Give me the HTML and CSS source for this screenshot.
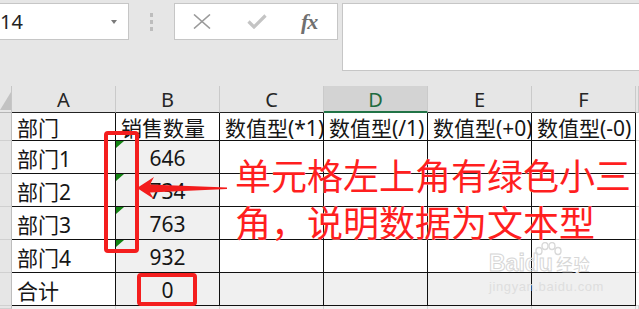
FILE: index.html
```html
<!DOCTYPE html>
<html lang="zh-CN">
<head>
<meta charset="utf-8">
<title>Excel</title>
<link rel="stylesheet" href="styles.css">
</head>
<body>
<div class="toolbar">
  <div class="namebox"><span class="name">14</span><span class="caret"></span></div>
  <div class="grip"><i></i><i></i><i></i></div>
  <div class="fxbox">
    <svg class="ic-x" width="18" height="15" viewBox="0 0 18 15"><path d="M1 0.5 L17 14.5 M17 0.5 L1 14.5" stroke="#9a9a9a" stroke-width="1.6" fill="none"/></svg>
    <svg class="ic-ok" width="20" height="15" viewBox="0 0 20 15"><path d="M1.5 7.5 L7 13 L18.5 1.5" stroke="#c4c4c4" stroke-width="3.2" fill="none"/></svg>
    <span class="fx">fx</span>
  </div>
  <div class="formula"></div>
</div>

<div class="sheet">
  <div class="corner"><svg width="12" height="27" viewBox="0 0 12 27"><polygon points="0,24 11,24 11,6" fill="#c2c2c2"/></svg></div>
  <div class="ch">A</div><div class="ch">B</div><div class="ch">C</div><div class="ch sel">D</div><div class="ch">E</div><div class="ch">F</div><div class="ch edge"></div>

  <div class="rh"></div>
  <div class="c">部门</div><div class="c">销售数量</div><div class="c">数值型(*1)</div><div class="c">数值型(/1)</div><div class="c">数值型(+0)</div><div class="c">数值型(-0)</div><div class="x"></div>

  <div class="rh"></div>
  <div class="c">部门1</div><div class="c g num tri">646</div><div class="c"></div><div class="c"></div><div class="c"></div><div class="c"></div><div class="x"></div>

  <div class="rh"></div>
  <div class="c">部门2</div><div class="c g num tri">734</div><div class="c"></div><div class="c"></div><div class="c"></div><div class="c"></div><div class="x"></div>

  <div class="rh"></div>
  <div class="c">部门3</div><div class="c g num tri">763</div><div class="c"></div><div class="c"></div><div class="c"></div><div class="c"></div><div class="x"></div>

  <div class="rh"></div>
  <div class="c">部门4</div><div class="c g num tri">932</div><div class="c"></div><div class="c"></div><div class="c"></div><div class="c"></div><div class="x"></div>

  <div class="rh"></div>
  <div class="c">合计</div><div class="c g num">0</div><div class="c g"></div><div class="c g"></div><div class="c g"></div><div class="c g"></div><div class="x"></div>

  <div class="rh"></div>
  <div class="r7"></div><div class="r7"></div><div class="r7"></div><div class="r7"></div><div class="r7"></div><div class="r7"></div><div class="r7"></div>
</div>

<div class="mark mark-col"></div>
<div class="mark mark-sum"></div>
<svg class="arrow" width="100" height="30" viewBox="0 0 100 30"><polygon points="0,13 17,2 13,9.5 90,12.5 90,14 13,17.5 17,24" fill="#f31c1c"/></svg>
<div class="note">单元格左上角有绿色小三<br>角，说明数据为文本型</div>

<div class="wm">
  <svg class="paw" width="30" height="17" viewBox="0 0 30 17"><g fill="none" stroke="#d9d9d9" stroke-width="1.4"><ellipse cx="6" cy="9" rx="3" ry="3.5"/><ellipse cx="12" cy="4" rx="3" ry="3.5"/><ellipse cx="19" cy="4" rx="3" ry="3.5"/><ellipse cx="25" cy="9" rx="3" ry="3.5"/></g></svg>
  <div class="wm-top"><span class="wm-b">Bai</span><span class="wm-b">du</span><span class="wm-c">经验</span></div>
  <div class="wm-url">jingyan.baidu.com</div>
</div>
</body>
</html>
```
FILE: styles.css
```css
* { box-sizing: border-box; }
html, body { margin: 0; padding: 0; }
body {
  width: 639px;
  height: 309px;
  overflow: hidden;
  position: relative;
  background: #e6e6e6;
  font-family: "Noto Sans", "Noto Sans CJK SC", sans-serif;
}

/* formula bar */
.toolbar {
  height: 86px;
  display: flex;
  align-items: flex-start;
  padding-top: 3px;
}
.namebox {
  margin-left: -1px;
  width: 130px;
  height: 37px;
  background: #fff;
  border: 1px solid #c6c6c6;
  display: flex;
  align-items: center;
  justify-content: space-between;
  padding-right: 11px;
}
.name { font-size: 20px; color: #222; margin-left: 0; }
.caret {
  width: 0; height: 0;
  border-left: 3px solid transparent;
  border-right: 3px solid transparent;
  border-top: 4px solid #7a7a7a;
}
.grip {
  width: 45px;
  height: 37px;
  display: flex;
  flex-direction: column;
  align-items: center;
  justify-content: center;
  gap: 3px;
}
.grip i { display: block; width: 3px; height: 4px; background: #bdbdbd; }
.fxbox {
  width: 164px;
  height: 37px;
  background: #fff;
  border: 1px solid #c6c6c6;
  display: flex;
  align-items: center;
}
.ic-x { margin-left: 18px; }
.ic-ok { margin-left: 36px; }
.fx {
  margin-left: 34px;
  font-family: "Liberation Serif", serif;
  font-style: italic;
  font-weight: bold;
  font-size: 22px;
  color: #707070;
  letter-spacing: -1px;
}
.formula {
  margin-left: 4px;
  margin-right: -2px;
  flex: 1;
  height: 68px;
  background: #fff;
  border: 1px solid #c6c6c6;
}

/* sheet grid */
.sheet {
  display: grid;
  grid-template-columns: 12px repeat(6, 104px) 1fr;
  grid-template-rows: 27px 28px repeat(5, 33px) 1fr;
  height: 223px;
}
.corner {
  background: #e6e6e6;
  border-right: 1px solid #c6c6c6;
  border-bottom: 1px solid #b5b5b5;
}
.corner svg { display: block; }
.ch {
  background: #e6e6e6;
  border-right: 1px solid #cacaca;
  border-bottom: 1px solid #222;
  display: flex;
  align-items: center;
  justify-content: center;
  font-size: 20px;
  color: #262626;
  padding-top: 1px;
}
.ch.sel {
  background: #d3d3d3;
  color: #1f6b40;
  border-bottom: 2px solid #217346;
}
.ch.edge { border-bottom-color: #b5b5b5; }
.rh {
  background: #e6e6e6;
  border-right: 1px solid #bdbdbd;
  border-bottom: 1px solid #d0d0d0;
}
.c {
  position: relative;
  background: #fff;
  border-right: 1px solid #111;
  border-bottom: 1px solid #111;
  display: flex;
  align-items: center;
  padding: 1px 0 0 5px;
  font-size: 21px;
  color: #161616;
  white-space: nowrap;
  overflow: hidden;
}
.c.num { justify-content: center; padding-left: 0; }
.c.g { background: #f0f0f0; }
.c.tri::before {
  content: "";
  position: absolute;
  top: 0;
  left: 0;
  width: 0;
  height: 0;
  border-top: 7px solid #128312;
  border-right: 8px solid transparent;
}
.x {
  background: #fff;
  border-bottom: 1px solid #d6d6d6;
}
.r7 {
  background: #f2f2f2;
  border-right: 1px solid #d4d4d4;
}

/* annotations */
.mark {
  position: absolute;
  border: 4px solid #f41e1e;
  border-radius: 4px;
}
.mark-col { left: 104px; top: 131px; width: 35px; height: 122px; }
.mark-sum { left: 137px; top: 273px; width: 60px; height: 33px; }
.arrow { position: absolute; left: 137px; top: 175px; }
.note {
  position: absolute;
  left: 235px;
  top: 151px;
  font-family: "Noto Sans CJK SC", sans-serif;
  font-size: 36px;
  line-height: 47px;
  color: #ff1f1f;
  white-space: nowrap;
  text-shadow: 0 0 1px #fff;
}

/* watermark */
.wm {
  position: absolute;
  left: 489px;
  top: 242px;
  width: 118px;
  color: #dcdcdc;
}
.paw { position: absolute; left: 44px; top: 0; }
.wm-top {
  margin-top: 9px;
  display: flex;
  align-items: baseline;
  line-height: 24px;
}
.wm-b {
  font-family: "Liberation Sans", sans-serif;
  font-weight: bold;
  font-size: 23px;
  color: transparent;
  -webkit-text-stroke: 1px #d6d6d6;
}
.wm-c {
  margin-left: 3px;
  font-family: "Noto Sans CJK SC", sans-serif;
  font-size: 17px;
  color: #d8d8d8;
}
.wm-url {
  margin-top: 3px;
  font-family: "Liberation Sans", sans-serif;
  font-size: 13px;
  letter-spacing: 0.6px;
  color: #dedede;
}
```
